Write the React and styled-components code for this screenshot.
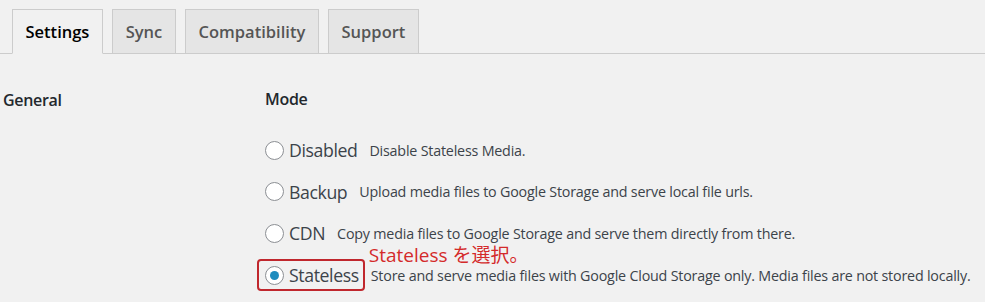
import React from "react";
import styled, { createGlobalStyle } from "styled-components";

const GlobalStyle = createGlobalStyle`
  html, body {
    margin: 0;
    padding: 0;
    background: #f1f1f1;
    font-family: "Open Sans", "Noto Sans", sans-serif;
    color: #23282d;
  }
`;

const tabs = ["Settings", "Sync", "Compatibility", "Support"];

const modes = [
  { label: "Disabled", desc: "Disable Stateless Media." },
  {
    label: "Backup",
    desc: "Upload media files to Google Storage and serve local file urls.",
  },
  {
    label: "CDN",
    desc: "Copy media files to Google Storage and serve them directly from there.",
  },
  {
    label: "Stateless",
    desc: "Store and serve media files with Google Cloud Storage only. Media files are not stored locally.",
    checked: true,
  },
];

function App() {
  return (
    <Page>
      <GlobalStyle />
      <TabBar>
        {tabs.map((t, i) => (
          <Tab key={t} $active={i === 0}>
            {t}
          </Tab>
        ))}
      </TabBar>
      <FormRow>
        <RowTitle>General</RowTitle>
        <Field>
          <FieldTitle>Mode</FieldTitle>
          <Options>
            {modes.map((m) => (
              <Option key={m.label}>
                <Choice $marked={m.checked}>
                  <Radio $checked={m.checked} />
                  <Label>{m.label}</Label>
                  {m.checked && <Note>Stateless を選択。</Note>}
                </Choice>
                <Desc>{m.desc}</Desc>
              </Option>
            ))}
          </Options>
        </Field>
      </FormRow>
    </Page>
  );
}

export default App;

const Page = styled.div`
  width: 985px;
  height: 302px;
  overflow: hidden;
`;
const TabBar = styled.div`
  display: flex;
  gap: 9.3px;
  padding: 9px 0 0 12px;
  border-bottom: 1px solid #ccc;
  height: 44px;
`;
const Tab = styled.div`
  box-sizing: border-box;
  height: ${(p) => (p.$active ? "45px" : "44px")};
  padding: 0 12.5px;
  display: flex;
  align-items: center;
  font-size: 16.5px;
  font-weight: 600;
  border: 1px solid #ccc;
  border-bottom: ${(p) => (p.$active ? "1px solid #f1f1f1" : "none")};
  background: ${(p) => (p.$active ? "#f1f1f1" : "#e5e5e5")};
  color: ${(p) => (p.$active ? "#000" : "#555")};
`;
const FormRow = styled.div`
  display: grid;
  grid-template-columns: 265px 1fr;
  padding-top: 34px;
`;
const RowTitle = styled.div`
  padding-left: 3px;
  font-size: 16px;
  font-weight: 600;
  letter-spacing: -0.3px;
  line-height: 24px;
  color: #23282d;
`;
const Field = styled.div`
  display: flex;
  flex-direction: column;
`;
const FieldTitle = styled.div`
  font-size: 16px;
  font-weight: 600;
  letter-spacing: -0.3px;
  line-height: 24px;
  margin-top: -1px;
`;
const Options = styled.div`
  display: flex;
  flex-direction: column;
  gap: 17.7px;
  margin-top: 27px;
`;
const Option = styled.div`
  display: flex;
  align-items: center;
  height: 24px;
`;
const Choice = styled.div`
  position: relative;
  display: flex;
  align-items: center;
  gap: 5px;
  margin-right: 12px;
  ${(p) =>
    p.$marked &&
    `
    &::after {
      content: "";
      position: absolute;
      left: -8px;
      right: -6px;
      top: -4px;
      bottom: -4px;
      border: 2.5px solid #c0272d;
      border-radius: 4px;
    }
  `}
`;
const Radio = styled.span`
  box-sizing: border-box;
  width: 19px;
  height: 19px;
  border-radius: 50%;
  border: 1px solid #8c8f94;
  background: #fff;
  display: flex;
  align-items: center;
  justify-content: center;
  &::before {
    content: "";
    display: ${(p) => (p.$checked ? "block" : "none")};
    width: 9px;
    height: 9px;
    border-radius: 50%;
    background: #1e8cbe;
  }
`;
const Label = styled.span`
  font-size: 17.7px;
  color: #3c434a;
  letter-spacing: -0.4px;
`;
const Desc = styled.span`
  font-size: 14.3px;
  color: #3c434a;
  letter-spacing: -0.2px;
`;
const Note = styled.span`
  position: absolute;
  left: 100%;
  margin-left: 10px;
  top: -20px;
  white-space: nowrap;
  font-size: 19px;
  line-height: 24px;
  color: #d42a2a;
  font-family: "Open Sans", "Noto Sans CJK JP", sans-serif;
`;
